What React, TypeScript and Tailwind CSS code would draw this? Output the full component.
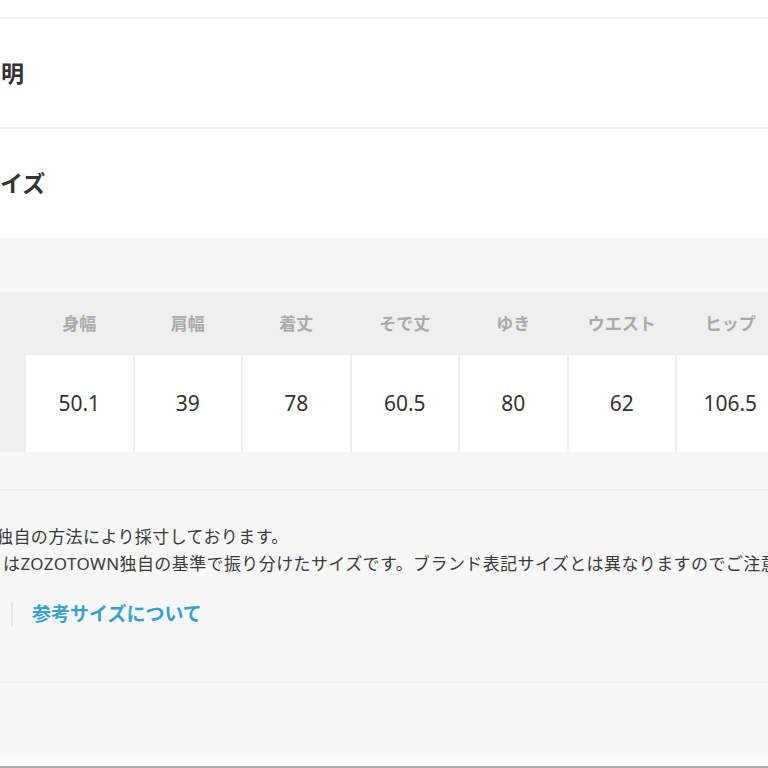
import React from 'react';

const columns = [
  { label: '身幅', value: '50.1' },
  { label: '肩幅', value: '39' },
  { label: '着丈', value: '78' },
  { label: 'そで丈', value: '60.5' },
  { label: 'ゆき', value: '80' },
  { label: 'ウエスト', value: '62' },
  { label: 'ヒップ', value: '106.5' },
];

export default function App() {
  return (
    <div className="w-[768px] h-[768px] overflow-hidden bg-white text-[#333] font-['Noto_Sans','Noto_Sans_CJK_JP',sans-serif]">
      {/* top spacer + divider */}
      <div className="h-[17px]" />
      <div className="h-[2px] bg-[#f0f0f0]" />

      {/* item description heading */}
      <div className="h-[108px] flex items-center">
        <h2 className="ml-[1px] text-[23px] font-bold leading-none">明</h2>
      </div>
      <div className="h-[2px] bg-[#f0f0f0]" />

      {/* size heading */}
      <div className="h-[109px] flex items-center">
        <h2 className="text-[23px] font-bold leading-none">イズ</h2>
      </div>

      {/* size section */}
      <div className="bg-[#f7f7f7]">
        <div className="pt-[54px]">
          <div className="w-max bg-[#efefef] grid grid-cols-[24px_repeat(7,106.5px)] grid-rows-[63px_97px] gap-x-[2px]">
            <div className="row-span-2" />
            {columns.map((c) => (
              <div key={c.label} className="flex items-center justify-center text-[17px] font-bold text-[#aaaaaa]">
                {c.label}
              </div>
            ))}
            {columns.map((c) => (
              <div key={c.value + c.label} className="bg-white flex items-center justify-center text-[21px] text-[#333]">
                {c.value}
              </div>
            ))}
          </div>
        </div>

        <div className="h-[37px]" />
        <div className="h-[2px] bg-[#eeeeee]" />

        {/* notes */}
        <div className="pt-[32px] text-[17px] leading-[27px] tracking-[0.4px] text-[#3a3a3a] whitespace-nowrap">
          <p className="-ml-[4px]">独自の方法により採寸しております。</p>
          <p className="ml-[3px]">はZOZOTOWN独自の基準で振り分けたサイズです。ブランド表記サイズとは異なりますのでご注意ください。</p>
        </div>

        {/* links */}
        <div className="mt-[25px] h-[24px] flex items-center">
          <div className="ml-[11px] h-full border-l-2 border-[#e6e6e6] pl-[19px] flex items-center">
            <a className="text-[19px] font-bold text-[#35a2cc] leading-none">参考サイズについて</a>
          </div>
        </div>

        <div className="h-[55px]" />
        <div className="h-[2px] bg-[#f1f1f1]" />
        <div className="h-[71px]" />
        <div className="h-[12px] bg-gradient-to-b from-[#f7f7f7] to-white" />
        <div className="h-[2px] bg-[#a9a9a9]" />
      </div>
    </div>
  );
}
